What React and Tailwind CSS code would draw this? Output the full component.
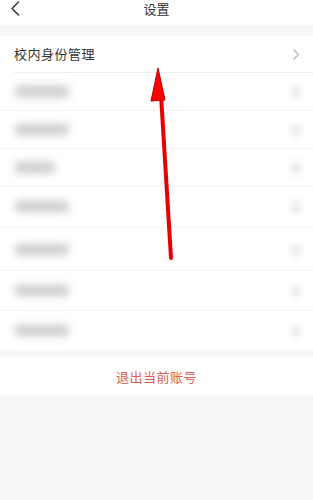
import React from "react";

const blurredRows = [
  { w: "w-[54px]", h: "h-[38px]" },
  { w: "w-[54px]", h: "h-[38px]" },
  { w: "w-[40px]", h: "h-[38px]" },
  { w: "w-[54px]", h: "h-[39px]" },
];

const blurredRows2 = [
  { w: "w-[54px]", h: "h-[42px]" },
  { w: "w-[54px]", h: "h-[40px]" },
  { w: "w-[54px]", h: "h-[39px]" },
];

function Chevron({ className = "" }) {
  return (
    <svg className={className} width="7" height="11" viewBox="0 0 7 11" fill="none">
      <path d="M1 1l4.5 4.5L1 10" stroke="currentColor" strokeWidth="1.2" strokeLinecap="round" strokeLinejoin="round" />
    </svg>
  );
}

function BlurRow({ w, h, last }) {
  return (
    <div className={`flex items-center justify-between pl-[15px] pr-[12px] ${h} ${last ? "" : "border-b border-[#f4f4f4]"}`}>
      <div className={`${w} h-[11px] rounded-sm bg-[#a8a8a8] blur-[4px] opacity-60`} />
      <div className="w-[10px] h-[12px] bg-[#d8d8d8] blur-[3px] opacity-50" />
    </div>
  );
}

export default function App() {
  return (
    <div
      className="relative w-[313px] h-[500px] bg-[#f7f7f7] overflow-hidden"
      style={{ fontFamily: '"Noto Sans CJK SC", "Noto Sans", sans-serif' }}
    >
      <div className="h-[25px] bg-white relative flex items-start justify-center pt-[1px]">
        <svg className="absolute left-[10px] top-[1px]" width="10" height="15" viewBox="0 0 10 15" fill="none">
          <path d="M8.5 1L2 7.5L8.5 14" stroke="#333" strokeWidth="1.5" strokeLinecap="round" strokeLinejoin="round" />
        </svg>
        <span className="text-[13px] text-[#333] leading-[16px]">设置</span>
      </div>
      <div className="h-[11px]" />
      <div className="bg-white">
        <div className="ml-[14px] flex items-center justify-between pr-[13px] h-[37px] border-b border-[#eeeeee]">
          <span className="text-[13px] text-[#333] tracking-[0.5px]">校内身份管理</span>
          <Chevron className="text-[#b5b5b5]" />
        </div>
        {blurredRows.map((r, i) => (
          <BlurRow key={i} {...r} last={i === blurredRows.length - 1} />
        ))}
        <div className="h-[3px] bg-[#f8f8f8]" />
        {blurredRows2.map((r, i) => (
          <BlurRow key={i} {...r} last={i === blurredRows2.length - 1} />
        ))}
      </div>
      <div className="h-[8px]" />
      <div className="bg-white h-[37px] flex items-center justify-center">
        <span className="text-[13px] text-[#df5b55] tracking-[0.5px]">退出当前账号</span>
      </div>

      <svg className="absolute left-0 top-0 pointer-events-none" width="313" height="500" viewBox="0 0 313 500">
        <line x1="171" y1="258" x2="161" y2="95" stroke="#e60000" strokeWidth="4" strokeLinecap="round" />
        <polygon points="158,68 151,101 165,100" fill="#ff0000" stroke="#c00000" strokeWidth="1" strokeLinejoin="round" />
      </svg>
    </div>
  );
}
